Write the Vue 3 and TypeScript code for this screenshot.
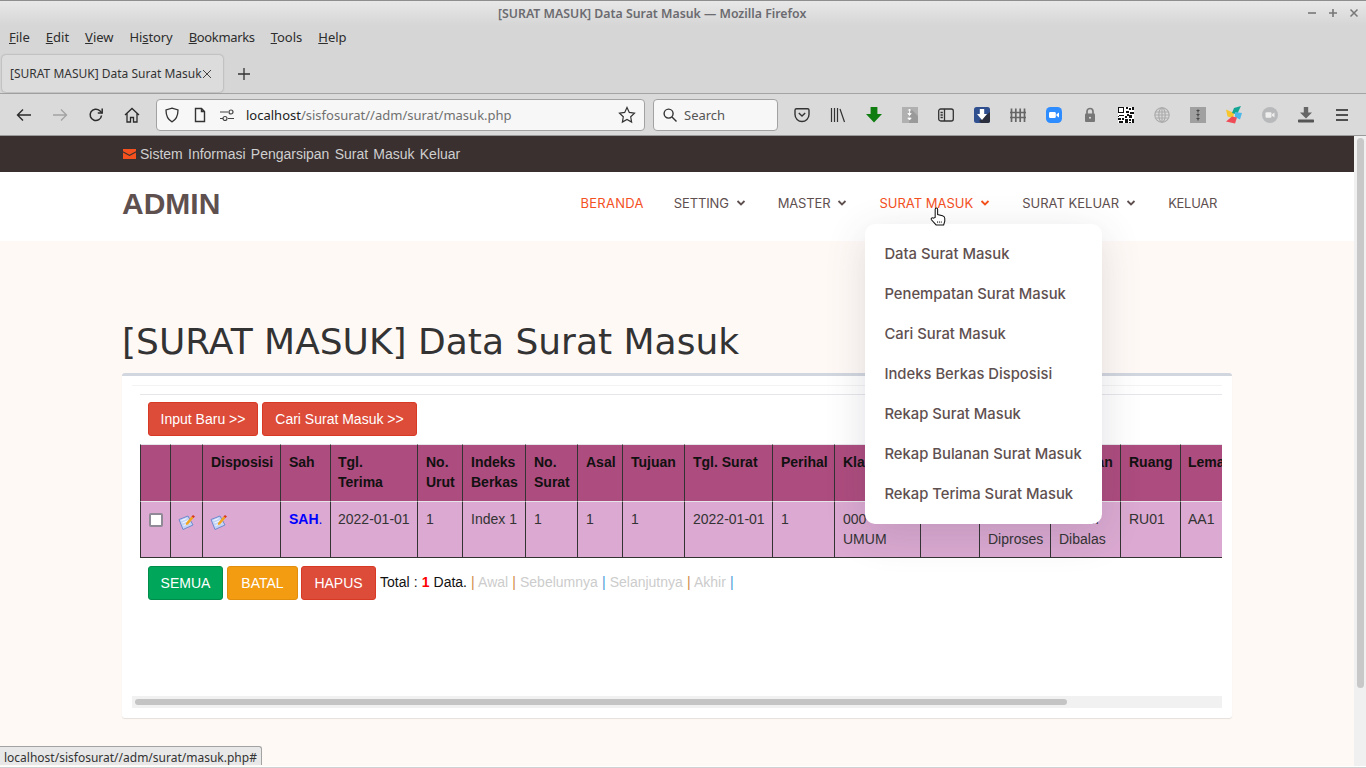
<script setup lang="ts">
type Col = { title: string; width: number; value: string };

const menus = ['File', 'Edit', 'View', 'History', 'Bookmarks', 'Tools', 'Help'];
const menuKeys = [0, 0, 0, 2, 0, 0, 0];

const navItems = [
  { label: 'BERANDA', caret: false, active: true },
  { label: 'SETTING', caret: true, active: false },
  { label: 'MASTER', caret: true, active: false },
  { label: 'SURAT MASUK', caret: true, active: true, open: true },
  { label: 'SURAT KELUAR', caret: true, active: false },
  { label: 'KELUAR', caret: false, active: false },
];

const dropdown = [
  'Data Surat Masuk',
  'Penempatan Surat Masuk',
  'Cari Surat Masuk',
  'Indeks Berkas Disposisi',
  'Rekap Surat Masuk',
  'Rekap Bulanan Surat Masuk',
  'Rekap Terima Surat Masuk',
];

const columns: Col[] = [
  { title: 'Tgl. Terima', width: 87, value: '2022-01-01' },
  { title: 'No. Urut', width: 45, value: '1' },
  { title: 'Indeks Berkas', width: 63, value: 'Index 1' },
  { title: 'No. Surat', width: 52, value: '1' },
  { title: 'Asal', width: 45, value: '1' },
  { title: 'Tujuan', width: 62, value: '1' },
  { title: 'Tgl. Surat', width: 88, value: '2022-01-01' },
  { title: 'Perihal', width: 62, value: '1' },
  { title: 'Klasifikasi', width: 86, value: '000\nUMUM' },
  { title: 'Lampiran', width: 59, value: '' },
  { title: 'Status', width: 71, value: 'Belum Diproses' },
  { title: 'Balasan', width: 70, value: 'Belum Dibalas' },
  { title: 'Ruang', width: 60, value: 'RU01' },
  { title: 'Lemari', width: 60, value: 'AA1' },
];
</script>

<template>
  <div class="screen">
    <header class="titlebar">
      <span class="titlebar__text">[SURAT MASUK] Data Surat Masuk — Mozilla Firefox</span>
      <div class="winbtns">
        <svg width="10" height="10" viewBox="0 0 10 10"><path d="M1 5h8" stroke="#777" stroke-width="1.6" /></svg>
        <svg width="10" height="10" viewBox="0 0 10 10"><path d="M1 5h8M5 1v8" stroke="#777" stroke-width="1.6" /></svg>
        <svg width="10" height="10" viewBox="0 0 10 10"><path d="M1.5 1.5l7 7M8.5 1.5l-7 7" stroke="#777" stroke-width="1.5" /></svg>
      </div>
    </header>

    <div class="menubar">
      <span v-for="(m, i) in menus" :key="m" class="menubar__item">{{ m.slice(0, menuKeys[i]) }}<u>{{ m[menuKeys[i]] }}</u>{{ m.slice(menuKeys[i] + 1) }}</span>
    </div>

    <div class="tabbar">
      <div class="tab">
        <span class="tab__label">[SURAT MASUK] Data Surat Masuk</span>
        <svg class="tab__close" width="10" height="10" viewBox="0 0 10 10"><path d="M1 1l8 8M9 1l-8 8" stroke="#444" stroke-width="1" /></svg>
      </div>
      <svg class="tabbar__new" width="12" height="12" viewBox="0 0 12 12"><path d="M6 0v12M0 6h12" stroke="#333" stroke-width="1.3" /></svg>
    </div>

    <div class="toolbar">
      <div class="toolbar__nav">
        <svg width="16" height="16" viewBox="0 0 16 16" fill="none" stroke="#2b2b2b" stroke-width="1.4"><path d="M15 8H1.5M7 2.5L1.5 8 7 13.5" /></svg>
        <svg width="16" height="16" viewBox="0 0 16 16" fill="none" stroke="#a3a3a3" stroke-width="1.4"><path d="M1 8h13.5M9 2.5L14.5 8 9 13.5" /></svg>
        <svg width="16" height="16" viewBox="0 0 16 16" fill="none" stroke="#2b2b2b" stroke-width="1.5"><path d="M13.5 8.5A5.7 5.7 0 1 1 11.8 3.8L14 6" /><path d="M14.2 1.6V6H9.8" /></svg>
        <svg width="16" height="16" viewBox="0 0 16 16" fill="none" stroke="#2b2b2b" stroke-width="1.3"><path d="M1 8l7-6.5L15 8M3 6.5V15h3.5v-4.5h3V15H13V6.5" /></svg>
      </div>
      <div class="urlbar">
        <svg width="16" height="16" viewBox="0 0 16 16" fill="none" stroke="#333" stroke-width="1.3"><path d="M8 1.2l6 1.8c0 5.5-1.5 9.5-6 11.8C3.500 12.500 2 8.500 2 3z" /></svg>
        <svg width="14" height="16" viewBox="0 0 14 16" fill="none" stroke="#333" stroke-width="1.4"><path d="M2.500 1.500h6l3 3v10h-9zM8.500 1.500v3h3" /></svg>
        <svg class="urlbar__perm" width="16" height="12" viewBox="0 0 16 12" fill="none" stroke="#444" stroke-width="1.2"><path d="M1 3h8M1 9.500h3M9 9.500h6" /><circle cx="12" cy="3" r="2" /><circle cx="6" cy="9.500" r="2" /></svg>
        <span class="urlbar__text"><b>localhost</b>/sisfosurat//adm/surat/masuk.php</span>
        <svg class="urlbar__star" width="18" height="18" viewBox="0 0 18 18" fill="none" stroke="#333" stroke-width="1.2"><path d="M9 1.500l2.300 4.900 5.200.7-3.800 3.700.9 5.300L9 13.500l-4.600 2.600.9-5.300L1.500 7.100l5.200-.7z" /></svg>
      </div>
      <div class="searchbar">
        <svg width="14" height="14" viewBox="0 0 14 14" fill="none" stroke="#333" stroke-width="1.4"><circle cx="5.600" cy="5.600" r="4.500" /><path d="M9 9l4.500 4.500" /></svg>
        <span>Search</span>
      </div>
      <div class="toolbar__icons">
        <svg width="16" height="16" viewBox="0 0 16 16" fill="none" stroke="#333" stroke-width="1.4"><path d="M2.500 1.800h11a1.500 1.500 0 0 1 1.500 1.500v4.200a7 7 0 0 1-14 0V3.300a1.500 1.500 0 0 1 1.500-1.500z" /><path d="M4.800 6L8 9l3.200-3" /></svg>
        <svg width="16" height="16" viewBox="0 0 16 16" fill="none" stroke="#333" stroke-width="1.200"><path d="M1.500 1v14M4.500 1v14M7.500 1v14M10 2l4.500 13" /></svg>
        <svg width="16" height="16" viewBox="0 0 16 16"><path d="M4.600 0h6.800v7H16l-8 8.500L0 7h4.600z" fill="#0f7d0f" /></svg>
        <svg width="16" height="16" viewBox="0 0 16 16"><rect width="16" height="16" fill="#b0b0b0" /><path d="M9 2l7 7v7H7z" fill="#9a9a9a" /><path d="M5.800 3h3.400M7.500 2v4M5.800 6.500l1.700 2 1.700-2zM5.800 11l1.700 2 1.700-2z" stroke="#fff" fill="#fff" stroke-width=".8" /></svg>
        <svg width="16" height="14" viewBox="0 0 16 14" fill="none" stroke="#333" stroke-width="1.300"><rect x=".7" y="1" width="14.600" height="12" rx="2" /><path d="M6.500 1v12M2.500 4.500h2.300M2.500 7h2.300M2.500 9.500h2.300" /></svg>
        <svg width="16" height="16" viewBox="0 0 16 16"><rect width="16" height="16" rx="2.500" fill="#2f4f8f" /><path d="M16 5v8.500a2.500 2.500 0 0 1-2.500 2.500H7l-2-2z" fill="#2b2f3d" /><path d="M5.800 2h4.400v5H13l-5 6-5-6h2.800z" fill="#fff" /></svg>
        <svg width="16" height="16" viewBox="0 0 16 16" fill="none" stroke="#666" stroke-width="1.700"><path d="M1.500 1.500v13.500M5.800 1.500v13.500M10.200 1.500v13.500M14.500 1.500v13.500" /><path d="M0 5.500h16M0 10.500h16" stroke-width="1.300" /></svg>
        <svg width="16" height="16" viewBox="0 0 16 16"><rect width="16" height="16" rx="4.500" fill="#2d8cff" /><rect x="3" y="5" width="6.800" height="6" rx="1.300" fill="#fff" /><path d="M10.500 7.200L13 5.500v5l-2.500-1.700z" fill="#fff" /></svg>
        <svg width="16" height="16" viewBox="0 0 16 16"><path d="M5 7V4.500a3 3 0 0 1 6 0V7" fill="none" stroke="#777" stroke-width="1.700" /><rect x="3" y="6.500" width="10" height="8.500" rx="1" fill="#777" /><circle cx="8" cy="10.700" r="1" fill="#ddd" /></svg>
        <svg width="16" height="16" viewBox="0 0 16 16" shape-rendering="crispEdges"><rect width="16" height="16" fill="#fff" /><path d="M0 0h6v6H0zM1 1v4h4V1z M0 9h1v1H0z" fill="#111" fill-rule="evenodd" /><path d="M8 0h2v2H8zM11 1h2v2h-2zM14 0h2v3h-2zM8 4h3v2H8zM12 5h4v2h-4zM9 7h2v2H9zM1 8h5v1H1zM7 9h2v2H7zM11 8h3v3h-3zM0 11h3v2H0zM4 11h2v2H4zM1 14h4v2H1zM7 12h3v4H7zM11 12h2v2h-2zM14 12h2v4h-2zM11 15h2v1h-2z" fill="#111" /></svg>
        <svg width="16" height="16" viewBox="0 0 16 16" fill="none" stroke="#aaa" stroke-width="1.100"><circle cx="8" cy="8" r="7.200" /><ellipse cx="8" cy="8" rx="3.200" ry="7.200" /><path d="M8 .8v14.400M1.500 5h13M.8 8h14.400M1.500 11h13" /></svg>
        <svg width="16" height="16" viewBox="0 0 16 16"><rect width="16" height="16" fill="#a0a0a0" /><path d="M6 3h4L8 5zM6 7h4L8 9zM6 11h4l-2 2z" fill="#444" /><path d="M8 2v12" stroke="#555" stroke-width=".7" /></svg>
        <svg width="16" height="18" viewBox="0 0 16 18"><path d="M0 3.500L8 7 7 12 1.500 10.500z" fill="#f7c52d" /><path d="M15 0L8 2 6 7l5 1.500z" fill="#12a594" /><path d="M9 6l7 1-2 6.500L9 11z" fill="#4cb8ea" /><path d="M6 10.500l5 1L9 17.500 0 15.500z" fill="#ef4b56" /></svg>
        <svg width="16" height="16" viewBox="0 0 16 16"><circle cx="8" cy="8" r="8" fill="#b8b9bb" /><rect x="3.500" y="5.200" width="6" height="5.600" rx="1" fill="#eee" /><path d="M10 7.300l2.500-1.700v4.800L10 8.700z" fill="#eee" /></svg>
        <svg width="16" height="16" viewBox="0 0 16 16"><path d="M5.800 0h4.400v5.500H14L8 11.500 2 5.500h3.800z" fill="#666" /><rect y="12.500" width="16" height="3" rx=".7" fill="#555" /></svg>
        <svg width="16" height="14" viewBox="0 0 16 14" stroke="#222" stroke-width="1.500"><path d="M2 2h12M2 7h12M2 12h12" /></svg>
      </div>
    </div>

    <div class="viewport">
      <main class="page">
        <div class="topbar">
          <svg class="topbar__mail" width="13" height="10" viewBox="0 0 13 10"><path d="M0 0h13v2.300L6.500 5.800 0 2.300zM0 3.600l6.500 3.500L13 3.600V10H0z" fill="#f4511e" /></svg>
          <span>Sistem Informasi Pengarsipan Surat Masuk Keluar</span>
        </div>

        <nav class="mainnav">
          <div class="mainnav__brand">ADMIN</div>
          <ul class="mainnav__list">
            <li v-for="item in navItems" :key="item.label" class="mainnav__item" :class="{ 'is-active': item.active }">
              <span>{{ item.label }}</span>
              <svg v-if="item.caret" class="caret" width="10" height="6" viewBox="0 0 10 6" fill="none" stroke="currentColor" stroke-width="1.800"><path d="M1.500 1L5 4.500 8.500 1" /></svg>
              <div v-if="item.open" class="dropdown">
                <a v-for="d in dropdown" :key="d" class="dropdown__link">{{ d }}</a>
              </div>
              <svg v-if="item.open" class="pointer" width="16" height="19" viewBox="0 0 17 20"><path d="M5.500 11V2.300a1.300 1.300 0 0 1 2.600 0V8l5.200 1.300c1.600.5 2.400 1 2.400 2.700v3l-1.200 4H6.500L1.500 13.500c-1-1.500.8-2.800 2-1.700z" fill="#fff" stroke="#111" stroke-width="1.100" /><path d="M8 15v2M10 15v2M12 15v2" stroke="#333" stroke-width=".8" /></svg>
            </li>
          </ul>
        </nav>

        <section class="content">
          <h1 class="content__title">[SURAT MASUK] Data Surat Masuk</h1>
          <div class="card">
            <div class="card__scroller">
              <div class="card__inner">
                <div class="actions">
                  <button class="btn btn--red btn--input">Input Baru &gt;&gt;</button>
                  <button class="btn btn--red btn--cari">Cari Surat Masuk &gt;&gt;</button>
                </div>
                <table class="grid">
                  <thead>
                    <tr>
                      <th class="w-check"></th>
                      <th class="w-edit"></th>
                      <th class="w-dispo">Disposisi</th>
                      <th class="w-sah">Sah</th>
                      <th v-for="c in columns" :key="c.title" :style="{ width: c.width + 'px' }">{{ c.title }}</th>
                    </tr>
                  </thead>
                  <tbody>
                    <tr>
                      <td><input class="grid__check" type="checkbox" /></td>
                      <td><svg class="note" width="17" height="17" viewBox="0 0 17 17"><path d="M1 6.500L10 3l5 9-10 4.500z" fill="#c4d4f6" stroke="#6f88cc" stroke-width="1" stroke-linejoin="round" /><path d="M3.500 7.500l5-2M4.500 10l6-2.500M5.500 12.500l6-2.500" stroke="#f4f7ff" stroke-width="1" /><path d="M8 10l5.500-6.500 2 1.500L10 11.500 7.800 12z" fill="#f2a51f" /><path d="M13.500 3.500L15 2l2 1.500-1.500 1.500z" fill="#d9391c" /></svg></td>
                      <td><svg class="note" width="17" height="17" viewBox="0 0 17 17"><path d="M1 6.500L10 3l5 9-10 4.500z" fill="#c4d4f6" stroke="#6f88cc" stroke-width="1" stroke-linejoin="round" /><path d="M3.500 7.500l5-2M4.500 10l6-2.500M5.500 12.500l6-2.500" stroke="#f4f7ff" stroke-width="1" /><path d="M8 10l5.500-6.500 2 1.500L10 11.500 7.800 12z" fill="#f2a51f" /><path d="M13.500 3.500L15 2l2 1.500-1.500 1.500z" fill="#d9391c" /></svg></td>
                      <td class="grid__sah"><b>SAH</b>.</td>
                      <td v-for="c in columns" :key="c.title">{{ c.value }}</td>
                    </tr>
                  </tbody>
                </table>
                <div class="footer-row">
                  <button class="btn btn--green btn--semua">SEMUA</button>
                  <button class="btn btn--orange btn--batal">BATAL</button>
                  <button class="btn btn--red btn--hapus">HAPUS</button>
                  <span class="pager">Total : <b class="pager__num">1</b> Data. <i class="sep-o">|</i> <span class="muted">Awal</span> <i class="sep-o">|</i> <span class="muted">Sebelumnya</span> <i class="sep-b">|</i> <span class="muted">Selanjutnya</span> <i class="sep-o">|</i> <span class="muted">Akhir</span> <i class="sep-b">|</i></span>
                </div>
              </div>
              <div class="hscroll"><div class="hscroll__thumb"></div></div>
            </div>
          </div>
        </section>
      </main>
      <aside class="vscroll"><div class="vscroll__thumb"></div></aside>
      <div class="statusline">localhost/sisfosurat//adm/surat/masuk.php#</div>
    </div>
    <div class="bottomline"></div>
  </div>
</template>

<style scoped>
.screen {
  display: flex;
  flex-direction: column;
  width: 1366px;
  height: 768px;
  overflow: hidden;
  background: #d6d6d6;
  font-family: 'Noto Sans', sans-serif;
  color: #333;
}

.titlebar {
  position: relative;
  display: flex;
  align-items: center;
  height: 25px;
  padding-left: 498px;
  flex: none;
  box-sizing: border-box;
  border-top: 1px solid #8e8e8e;
  background: linear-gradient(#e8e8e8, #d6d6d6);
  font-size: 12.3px;
  font-weight: 600;
  color: #6b6b70;
}

.winbtns {
  position: absolute;
  top: 7px;
  right: 7px;
  display: flex;
  gap: 11px;
}

.menubar {
  display: flex;
  align-items: center;
  gap: 16px;
  height: 24px;
  padding-left: 9px;
  flex: none;
  font-size: 13px;
  color: #2d2d2d;
}

.menubar__item:nth-child(4) {
  letter-spacing: -0.1px;
}

.menubar__item:nth-child(5) {
  letter-spacing: -0.35px;
}

.tabbar {
  display: flex;
  align-items: center;
  height: 45px;
  padding: 5px 0 0 2px;
  box-sizing: border-box;
  flex: none;
  border-bottom: 1px solid #a3a3a3;
}

.tab {
  display: flex;
  align-items: center;
  width: 221px;
  height: 37px;
  padding-left: 8px;
  box-sizing: border-box;
  background: #dcdcdc;
  border-radius: 4px;
  box-shadow: 0 0 2px rgba(0, 0, 0, 0.35);
  font-size: 12px;
  color: #333;
}

.tab__label {
  white-space: nowrap;
}

.tabbar__new {
  margin-left: 15px;
}

.toolbar {
  display: flex;
  align-items: center;
  height: 42px;
  flex: none;
  box-sizing: border-box;
  background: #dadada;
  border-bottom: 1px solid #9a9a9a;
}

.toolbar__nav {
  display: flex;
  gap: 20px;
  padding-left: 16px;
  width: 156px;
  box-sizing: border-box;
}

.urlbar {
  display: flex;
  align-items: center;
  width: 489px;
  height: 32px;
  box-sizing: border-box;
  padding: 0 8px 0 7px;
  background: #f7f7f7;
  border: 1px solid #a2a2a2;
  border-radius: 4px;
}

.urlbar svg {
  margin-right: 6px;
}

.urlbar svg:nth-child(2) {
  margin: 0 12px 0 7px;
}

.urlbar__perm {
  flex: none;
}

.urlbar__text {
  margin-left: 5px;
  font-size: 13px;
  color: #707070;
  white-space: nowrap;
}

.urlbar__text b {
  font-weight: 400;
  color: #222;
}

.urlbar__star {
  margin: 0 0 0 auto !important;
}

.searchbar {
  display: flex;
  align-items: center;
  gap: 7px;
  width: 125px;
  height: 32px;
  margin-left: 8px;
  padding-left: 9px;
  box-sizing: border-box;
  background: #f7f7f7;
  border: 1px solid #a2a2a2;
  border-radius: 4px;
  font-size: 13px;
  color: #555;
}

.toolbar__icons {
  display: flex;
  align-items: center;
  gap: 20px;
  margin-left: 16px;
}

.viewport {
  position: relative;
  display: flex;
  flex: 1;
  min-height: 0;
  background: #fff9f6;
}

.bottomline {
  height: 2px;
  flex: none;
  box-sizing: border-box;
  background: #d0d0d0;
  border-top: 1px solid #fff;
}

.page {
  flex: 1;
  min-width: 0;
}

.topbar {
  display: flex;
  align-items: center;
  height: 36px;
  padding-left: 123px;
  background: #3a302f;
  color: #cfcfcf;
  font-family: 'Liberation Sans', Arial, sans-serif;
  font-size: 14px;
  word-spacing: 1.33px;
}

.topbar__mail {
  margin-right: 4px;
}

.mainnav {
  display: flex;
  align-items: center;
  justify-content: space-between;
  height: 69px;
  padding: 0 137px 0 122px;
  background: #fff;
}

.mainnav__brand {
  margin-bottom: 5px;
  font-family: 'Liberation Sans', Arial, sans-serif;
  font-size: 30px;
  font-weight: 700;
  color: #5f5050;
}

.mainnav__list {
  display: flex;
  gap: 30px;
  margin: 0 0 7px;
  padding: 0;
  list-style: none;
}

.mainnav__item {
  position: relative;
  display: flex;
  align-items: center;
  gap: 7px;
  font-family: Inter, sans-serif;
  font-size: 13px;
  color: #5f5050;
}

.mainnav__item:nth-child(1) {
  letter-spacing: 0.28px;
}

.mainnav__item:nth-child(2),
.mainnav__item:nth-child(3) {
  letter-spacing: -0.15px;
}

.mainnav__item:nth-child(6) {
  letter-spacing: -0.3px;
}

.caret {
  margin-right: 2px;
}

.mainnav__item.is-active {
  color: #f4511e;
}

.dropdown {
  position: absolute;
  top: 29px;
  left: -14px;
  z-index: 5;
  display: flex;
  flex-direction: column;
  width: 237px;
  padding: 10px 0;
  box-sizing: border-box;
  background: #fff;
  border-radius: 10px;
  box-shadow: 0 10px 40px rgba(60, 60, 90, 0.16);
}

.dropdown__link {
  display: flex;
  align-items: center;
  height: 40px;
  padding-left: 19px;
  font-size: 14.8px;
  font-weight: 500;
  letter-spacing: 0;
  color: #5f5050;
  white-space: nowrap;
}

.pointer {
  position: absolute;
  top: 12px;
  left: 51px;
  z-index: 6;
}

.content {
  padding: 0 122px;
}

.content__title {
  margin: 78px 0 8px;
  font-family: 'DejaVu Sans', sans-serif;
  font-size: 36px;
  font-weight: 400;
  line-height: 46px;
  color: #333;
}

.card {
  width: 1110px;
  height: 345px;
  padding: 0 10px;
  box-sizing: border-box;
  background: #fff;
  border-top: 3px solid #d2d6de;
  border-radius: 3px;
  box-shadow: 0 1px 1px rgba(0, 0, 0, 0.1);
}

.card__scroller {
  display: flex;
  flex-direction: column;
  height: 100%;
  overflow: hidden;
}

.card__inner {
  flex: 1;
  margin-top: 9px;
  padding-top: 8px;
  border-top: 1px solid #f3f3f3;
}

.actions {
  display: flex;
  gap: 4px;
  margin-left: 8px;
  padding: 7px 0 8px 8px;
  border-top: 1px solid #e6e6ea;
}

.btn {
  height: 34px;
  padding: 0;
  box-sizing: border-box;
  border: 1px solid transparent;
  border-radius: 3px;
  color: #fff;
  font-family: 'Liberation Sans', Arial, sans-serif;
  font-size: 14px;
}

.btn--red {
  background: #dd4b39;
  border-color: #d73925;
}

.btn--green {
  background: #00a65a;
  border-color: #008d4c;
}

.btn--orange {
  background: #f39c12;
  border-color: #e08e0b;
}

.btn--input { width: 110px; }
.btn--cari { width: 155px; }
.btn--semua { width: 75px; }
.btn--batal { width: 71px; }
.btn--hapus { width: 75px; margin-left: -1px; }

.grid {
  width: 1100px;
  margin-left: 8px;
  table-layout: fixed;
  border-collapse: separate;
  border-spacing: 0;
  font-family: 'Liberation Sans', Arial, sans-serif;
  font-size: 14px;
  line-height: 20px;
  color: #333;
}

.grid th,
.grid td {
  padding: 7px 8px 8px;
  vertical-align: top;
  text-align: left;
  box-sizing: border-box;
  border-left: 1px solid #333;
}

.grid th {
  height: 58px;
  background: #ad4c7e;
  color: #111;
  font-weight: 700;
  border-top: 1px solid #e6e6ea;
  border-bottom: 1px solid #e6e6ea;
}

.grid td {
  height: 56px;
  padding-right: 6px;
  background: #dba9d1;
  border-bottom: 1px solid #333;
  white-space: pre-line;
}

.grid th:nth-child(5),
.grid td:nth-child(5),
.grid th:nth-child(18),
.grid td:nth-child(18) {
  padding-left: 7px;
}

.w-check { width: 30px; }
.w-edit { width: 32px; }
.w-dispo { width: 78px; }
.w-sah { width: 50px; }

.grid__check {
  display: block;
  width: 14px;
  height: 14px;
  margin: 4px 0 0;
  box-sizing: border-box;
  appearance: none;
  background: #fff;
  border: 2px solid #8f8a96;
  border-radius: 2px;
}

.note {
  display: block;
  margin: 4px 0 0 -1px;
}

.grid__sah {
  color: #00f;
}

.grid__sah b {
  font-weight: 700;
}

.footer-row {
  display: flex;
  align-items: flex-start;
  gap: 4px;
  margin-left: 16px;
  padding-top: 8px;
  white-space: nowrap;
}

.pager {
  font-family: 'Liberation Sans', Arial, sans-serif;
  font-size: 14px;
  line-height: 32px;
  word-spacing: 0.2px;
  color: #111;
}

.pager__num {
  color: #f00;
}

.pager i {
  font-style: normal;
}

.sep-o {
  color: #d08a45;
}

.sep-b {
  color: #4a9bd8;
}

.muted {
  color: #ccc;
}

.hscroll {
  height: 12px;
  margin-bottom: 10px;
  padding: 3px;
  box-sizing: border-box;
  background: #f1f1f1;
}

.hscroll__thumb {
  width: 932px;
  height: 6px;
  border-radius: 3px;
  background: #c4c4c4;
}

.vscroll {
  width: 12px;
  flex: none;
  padding: 2px 2px 0 3px;
  box-sizing: border-box;
  background: #f0f0f0;
}

.vscroll__thumb {
  height: 550px;
  border-radius: 4px;
  background: #c8c8c8;
}

.statusline {
  position: absolute;
  left: 0;
  bottom: 1px;
  height: 19px;
  padding: 0 4px;
  box-sizing: border-box;
  background: #e8e8e8;
  border: 1px solid #a3a3a3;
  border-left: 0;
  border-bottom: 0;
  border-radius: 0 3px 0 0;
  font-size: 12px;
  line-height: 21px;
  color: #333;
  white-space: nowrap;
}
</style>
